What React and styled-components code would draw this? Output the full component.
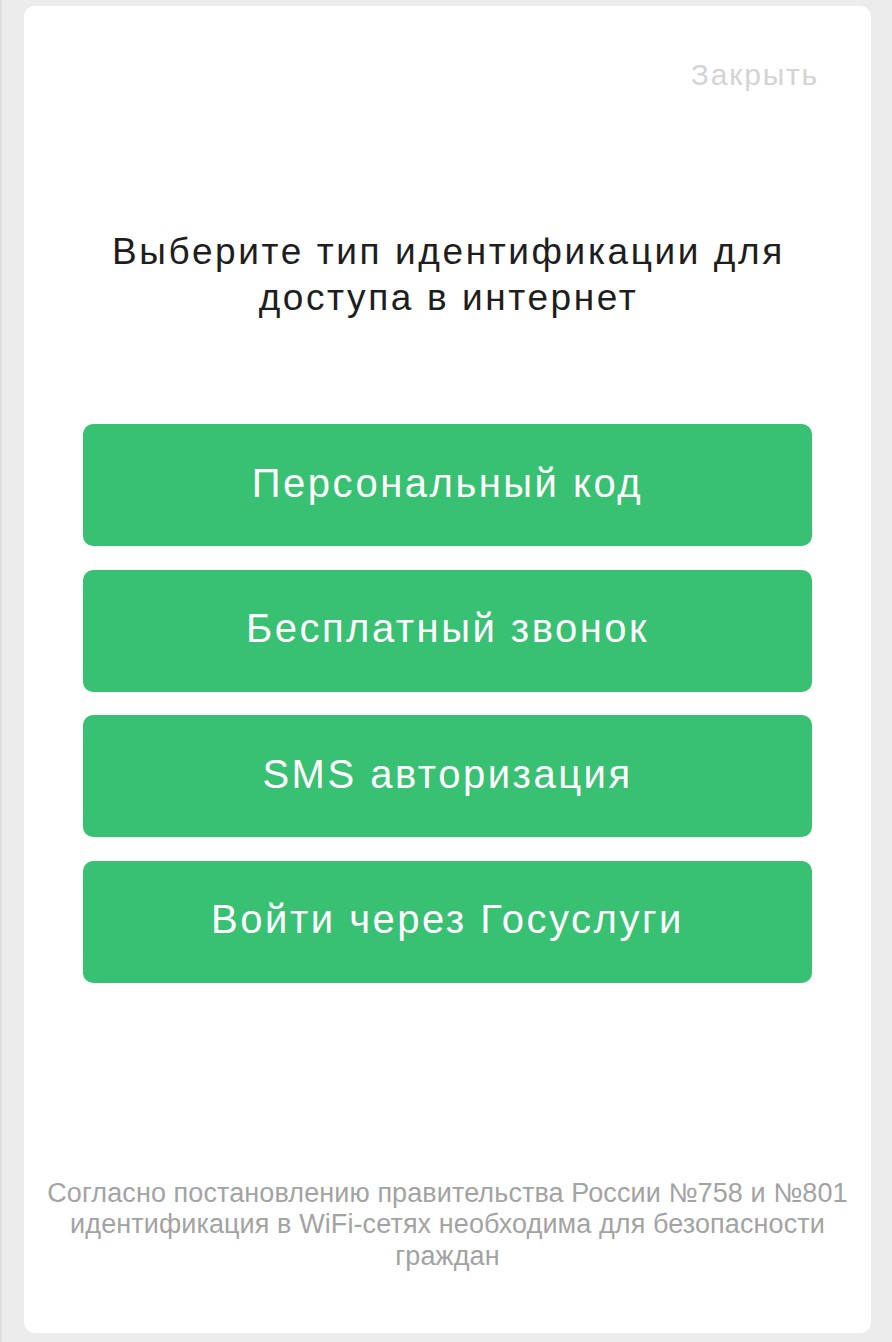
import React from "react";
import styled, { createGlobalStyle } from "styled-components";

const Global = createGlobalStyle`
  html, body {
    margin: 0;
    padding: 0;
    background: #ececec;
  }
  body {
    border-left: 2px solid #dedede;
    font-family: "Liberation Sans", Arial, sans-serif;
  }
  * { box-sizing: border-box; }
`;

const Page = styled.div`
  display: flex;
  padding: 6px 0 9px 22px;
`;

const Card = styled.div`
  width: 847px;
  height: 1327px;
  background: #ffffff;
  border-radius: 11px;
  display: flex;
  flex-direction: column;
  padding: 53px 52px 61px 52px;
`;

const CloseRow = styled.div`
  display: flex;
  justify-content: flex-end;
`;

const CloseLink = styled.a`
  font-size: 30px;
  line-height: 32px;
  letter-spacing: 1.8px;
  color: #d4d4d4;
  text-decoration: none;
  cursor: pointer;
`;

const Title = styled.h1`
  margin: 138px auto 0;
  width: 720px;
  font-size: 37px;
  line-height: 46px;
  font-weight: normal;
  letter-spacing: 2.6px;
  color: #1e1e1e;
  text-align: center;
  padding-left: 2px;
`;

const Options = styled.div`
  margin: 103px 7px 0;
  display: flex;
  flex-direction: column;
  gap: 23.5px;
`;

const OptionButton = styled.button`
  height: 122px;
  width: 100%;
  border: none;
  border-radius: 10px;
  background: #38c172;
  color: #ffffff;
  font-family: "Liberation Sans", Arial, sans-serif;
  font-size: 40px;
  letter-spacing: 2.5px;
  display: flex;
  align-items: center;
  justify-content: center;
  padding: 0 0 4px 0;
  cursor: pointer;
`;

const Footer = styled.p`
  margin: auto -36px 0;
  font-size: 27px;
  line-height: 31.5px;
  letter-spacing: 0.1px;
  color: #a3a3a3;
  text-align: center;
`;

const options = [
  "Персональный код",
  "Бесплатный звонок",
  "SMS авторизация",
  "Войти через Госуслуги",
];

export default function App() {
  return (
    <>
      <Global />
      <Page>
        <Card>
          <CloseRow>
            <CloseLink>Закрыть</CloseLink>
          </CloseRow>
          <Title>Выберите тип идентификации для доступа в интернет</Title>
          <Options>
            {options.map((o) => (
              <OptionButton key={o}>{o}</OptionButton>
            ))}
          </Options>
          <Footer>
            Согласно постановлению правительства России №758 и №801 идентификация в WiFi-сетях необходима для безопасности граждан
          </Footer>
        </Card>
      </Page>
    </>
  );
}
